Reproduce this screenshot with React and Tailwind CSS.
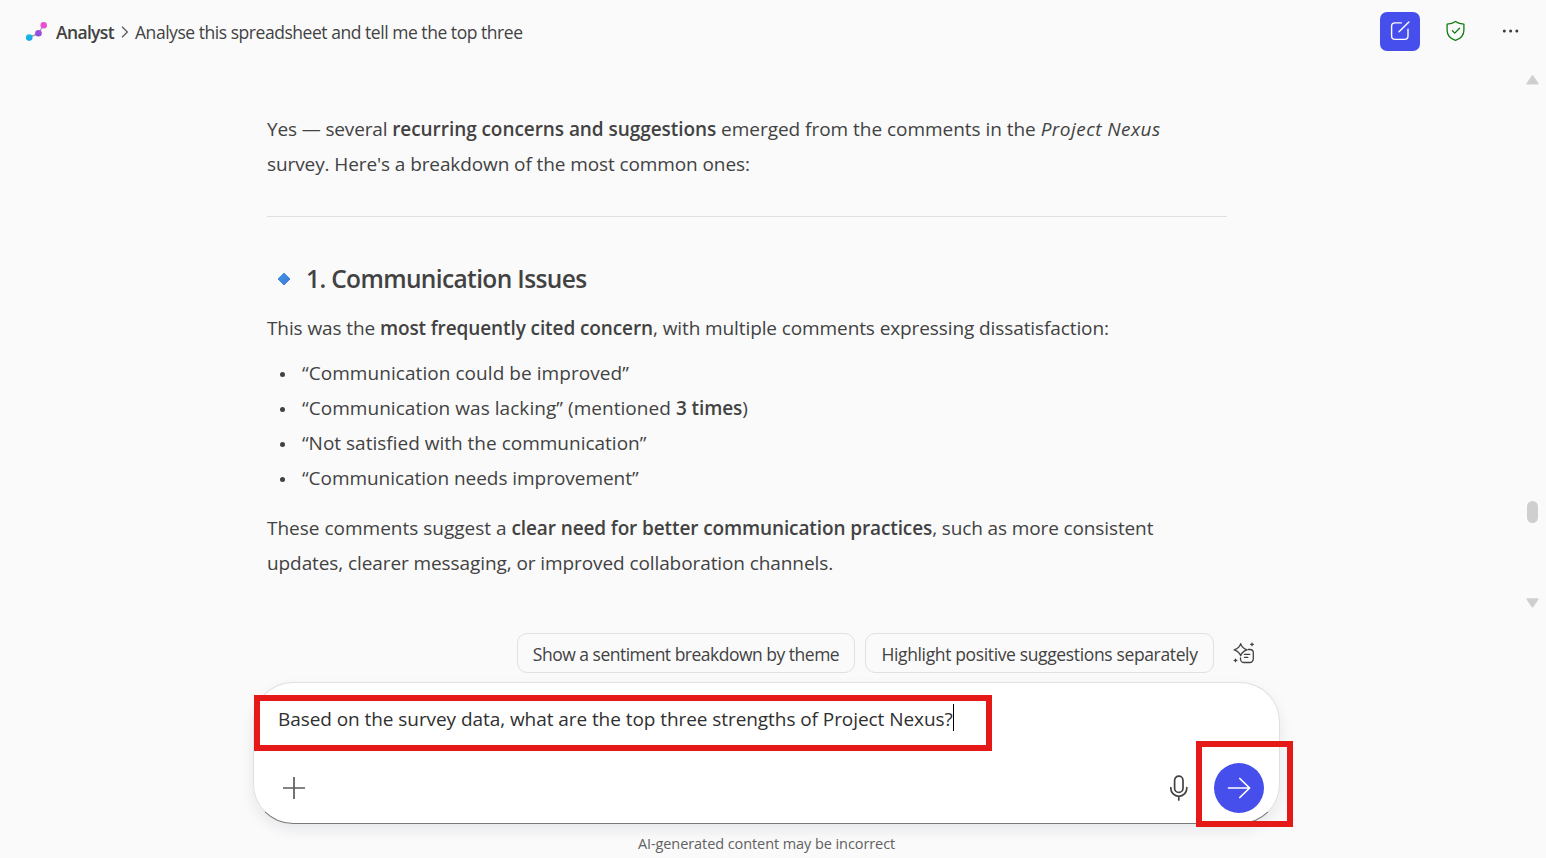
import React from "react";

function AnalystLogo() {
  return (
    <svg width="22" height="20" viewBox="0 0 22 20" className="shrink-0">
      <defs>
        <linearGradient id="cyanDot" x1="0" y1="0" x2="1" y2="1">
          <stop offset="0" stopColor="#17c3dc" />
          <stop offset="1" stopColor="#1f9bf0" />
        </linearGradient>
        <linearGradient id="purpleDot" x1="0" y1="1" x2="1" y2="0">
          <stop offset="0" stopColor="#7a4be0" />
          <stop offset="1" stopColor="#b04ee0" />
        </linearGradient>
      </defs>
      <path d="M4 15.5 L13.5 11.5 L18.5 3" stroke="#a3a3a3" strokeWidth="1.4" fill="none" />
      <circle cx="4.2" cy="15.6" r="3.3" fill="url(#cyanDot)" />
      <circle cx="13.5" cy="11.3" r="3.3" fill="url(#purpleDot)" />
      <circle cx="18.7" cy="3.3" r="3.2" fill="#e84fd0" />
    </svg>
  );
}

function Header() {
  return (
    <header className="flex h-16 items-center pr-[27px] pl-[25px]">
      <AnalystLogo />
      <span className="ml-[9px] w-[58px] text-[17.5px] leading-6 font-semibold tracking-[-0.65px]">Analyst</span>
      <svg width="8" height="12" viewBox="0 0 8 12" className="ml-[7px]" fill="none" stroke="#555" strokeWidth="1.2">
        <path d="M1 0.8 L6.4 6 L1 11.2" />
      </svg>
      <span className="ml-[6px] text-[17.5px] leading-6 tracking-[-0.46px]">
        Analyse this spreadsheet and tell me the top three
      </span>
      <div className="mb-[2px] ml-auto flex items-center">
        <button className="flex h-[39px] w-10 items-center justify-center rounded-[7px] bg-[#464feb]">
          <svg width="20" height="20" viewBox="0 0 20 20" fill="none" stroke="#fff" strokeWidth="1.4" strokeLinecap="round">
            <path d="M11.3 1.9 H5 A3.4 3.4 0 0 0 1.6 5.3 V15 A3.4 3.4 0 0 0 5 18.4 H14.6 A3.4 3.4 0 0 0 18 15 V8.3" />
            <path d="M9 10.8 L18.9 0.9" />
          </svg>
        </button>
        <svg width="20" height="22" viewBox="0 0 20 22" className="ml-[26px]" fill="none" stroke="#107c10" strokeWidth="1.3" strokeLinecap="round" strokeLinejoin="round">
          <path d="M9.5 1.4 C11.8 3.1 14.4 4 17.9 4.2 V10.2 C17.9 15 15 18.5 9.5 20.4 C4 18.5 1.1 15 1.1 10.2 V4.2 C4.6 4 7.2 3.1 9.5 1.4 Z" />
          <path d="M6.4 10.7 L8.8 13.1 L13.5 8.2" />
        </svg>
        <svg width="18" height="6" viewBox="0 0 18 6" className="ml-[35px]" fill="#3b3b3b">
          <circle cx="3.3" cy="3" r="1.5" />
          <circle cx="9.6" cy="3" r="1.5" />
          <circle cx="15.8" cy="3" r="1.5" />
        </svg>
      </div>
    </header>
  );
}

const bullets = [
  <span className="tracking-[0.06px]">“Communication could be improved”</span>,
  <span className="tracking-[0.05px]">
    “Communication was lacking” (mentioned <b className="font-semibold tracking-[-0.1px]">3 times</b>)
  </span>,
  <span>“Not satisfied with the communication”</span>,
  <span className="tracking-[-0.04px]">“Communication needs improvement”</span>,
];

function Message() {
  return (
    <article className="w-[960px] pt-[48px] text-[19px] leading-[35px] whitespace-nowrap">
      <p>
        <span className="tracking-[-0.14px]">Yes — several </span>
        <b className="font-semibold tracking-[-0.06px]">recurring concerns and suggestions</b>
        <span className="tracking-[-0.03px]"> emerged from the comments in the </span>
        <em className="tracking-[0.45px]">Project Nexus</em>
        <br />
        <span className="tracking-[-0.1px]">survey. Here's a breakdown of the most common ones:</span>
      </p>
      <hr className="mt-[34px] border-[#e0e0e0]" />
      <h3 className="mt-[42px] flex h-10 items-center text-[24.5px] font-semibold">
        <svg width="14" height="14" viewBox="0 0 14 14" className="mr-[15px] ml-[10px]">
          <defs>
            <linearGradient id="diamond" x1="0" y1="0" x2="1" y2="1">
              <stop offset="0" stopColor="#3f97e0" />
              <stop offset="1" stopColor="#4178da" />
            </linearGradient>
          </defs>
          <path d="M7 1 L13 7 L7 13 L1 7 Z" fill="url(#diamond)" stroke="url(#diamond)" strokeWidth="1" strokeLinejoin="round" />
        </svg>
        <span className="mb-[1px] tracking-[-0.63px]">1. Communication Issues</span>
      </h3>
      <p className="mt-[12px]">
        <span className="tracking-[-0.1px]">This was the </span>
        <b className="font-semibold tracking-[-0.1px]">most frequently cited concern</b>
        <span className="tracking-[-0.1px]">, with multiple comments expressing dissatisfaction:</span>
      </p>
      <ul className="mt-[10px]">
        {bullets.map((item, i) => (
          <li key={i} className="flex items-center">
            <span className="mt-[1px] mr-[17px] ml-[13px] h-[5px] w-[5px] rounded-full bg-[#424242]" />
            <span>{item}</span>
          </li>
        ))}
      </ul>
      <p className="mt-[15px]">
        <span>These comments suggest a </span>
        <b className="font-semibold tracking-[-0.11px]">clear need for better communication practices</b>
        <span className="tracking-[-0.12px]">, such as more consistent</span>
        <br />
        <span className="tracking-[-0.09px]">updates, clearer messaging, or improved collaboration channels.</span>
      </p>
    </article>
  );
}

function Scrollbar() {
  return (
    <div className="flex w-[14px] flex-col items-center pt-[10px] pb-[9px]">
      <svg width="14" height="12" viewBox="0 0 14 12" fill="#cfcfcf" stroke="#cfcfcf" strokeWidth="2" strokeLinejoin="round">
        <path d="M7.5 2.4 L12.5 9.6 H2.5 Z" />
      </svg>
      <div className="mt-[415px] h-[22px] w-[11px] rounded-full bg-[#cfcfcf]" />
      <svg width="14" height="12" viewBox="0 0 14 12" className="mt-auto" fill="#cfcfcf" stroke="#cfcfcf" strokeWidth="2" strokeLinejoin="round">
        <path d="M7.5 9.4 L12.5 2.2 H2.5 Z" />
      </svg>
    </div>
  );
}

function Suggestions() {
  return (
    <div className="flex h-10 items-center justify-end pr-[25px] text-[17.5px] leading-6 whitespace-nowrap">
      <button className="flex h-10 w-[338px] items-center justify-center rounded-[10px] border border-[#e0e0e0] pt-[2px]">
        <span className="tracking-[-0.5px]">Show a sentiment breakdown by theme</span>
      </button>
      <button className="ml-[10px] flex h-10 w-[349px] items-center justify-center rounded-[10px] border border-[#e0e0e0] pt-[2px]">
        <span className="tracking-[-0.36px]">Highlight positive suggestions separately</span>
      </button>
      <svg width="22" height="22" viewBox="0 0 22 22" className="ml-[19px]" fill="none" stroke="#424242" strokeWidth="1.3" strokeLinecap="round" strokeLinejoin="round">
        <path d="M7.7 1.6 C8.6 5 10 6.4 14 7.9 C10 9.2 8.6 10.6 7.7 13.8 C6.6 10.6 5.2 9.2 1.2 7.9 C5.2 6.4 6.8 5 7.7 1.6 Z" />
        <path d="M15.2 7.5 H17 A3.3 3.3 0 0 1 20.3 10.8 V17 A3.5 3.5 0 0 1 16.8 20.5 H11 A3.5 3.5 0 0 1 7.5 17 V16" />
        <path d="M11.4 12.4 H16.8 M11.4 15.4 H14.8" />
        <path d="M19 1.1 V3.7 M17.7 2.4 H20.3 M2.5 17.1 V19.7 M1.2 18.4 H3.8" />
      </svg>
    </div>
  );
}

function Composer() {
  return (
    <div className="relative mt-[9px] h-[142px] w-[1027px] rounded-[40px] border border-[#e0e0e0] border-b-[#7a7a7a] bg-white shadow-[0_6px_14px_rgba(0,20,60,0.08)]">
      <div className="flex h-full flex-col justify-between pt-[21px] pr-[15px] pb-[10px] pl-[24px]">
        <div className="flex items-center text-[19px] leading-[30px] whitespace-nowrap text-[#303030]">
          <span className="tracking-[-0.065px]">Based on the survey data, what are the top three strengths of Project Nexus?</span>
          <span className="mb-[3px] h-[27px] w-px bg-black" />
        </div>
        <div className="flex items-center">
          <svg width="24" height="24" viewBox="0 0 24 24" className="ml-[4px]" stroke="#5c5c5c" strokeWidth="1.7">
            <path d="M12 1 V23 M1 12 H23" />
          </svg>
          <svg width="20" height="26" viewBox="0 0 20 26" className="ml-auto" fill="none" stroke="#424242" strokeWidth="1.7" strokeLinecap="round">
            <rect x="5.6" y="1.2" width="8.4" height="16.2" rx="4.2" />
            <path d="M1.8 12.6 V13.3 A8 8 0 0 0 17.8 13.3 V12.6 M9.8 21.3 V25" />
          </svg>
          <button className="ml-[25px] flex h-[50px] w-[50px] items-center justify-center rounded-full bg-[#464feb]">
            <svg width="24" height="22" viewBox="0 0 24 22" fill="none" stroke="#fff" strokeWidth="1.7" strokeLinecap="round" strokeLinejoin="round">
              <path d="M1.5 11 H22.6 M12.8 1.5 L22.6 11 L12.8 20.5" />
            </svg>
          </button>
        </div>
      </div>
      <div className="absolute top-[12px] -left-[0.5px] h-[56px] w-[738px] border-[6px] border-[#e61919]" />
      <div className="absolute top-[57.5px] left-[942px] h-[86px] w-[97px] border-[6px] border-[#e61919]" />
    </div>
  );
}

export default function App() {
  return (
    <div className="flex h-[858px] w-[1546px] flex-col overflow-hidden bg-[#fafafa] font-['Open_Sans','Noto_Sans',sans-serif] text-[#424242]">
      <Header />
      <main className="flex h-[554px] justify-between pr-[7px] pl-[267px]">
        <Message />
        <Scrollbar />
      </main>
      <footer className="flex flex-col pt-[15px] pl-[253px]">
        <div className="w-[1027px]">
          <Suggestions />
          <Composer />
          <p className="mt-[9px] text-center text-[14.5px] leading-[22px] text-[#616161]">
            <span className="tracking-[-0.08px]">AI-generated content may be incorrect</span>
          </p>
        </div>
      </footer>
    </div>
  );
}
